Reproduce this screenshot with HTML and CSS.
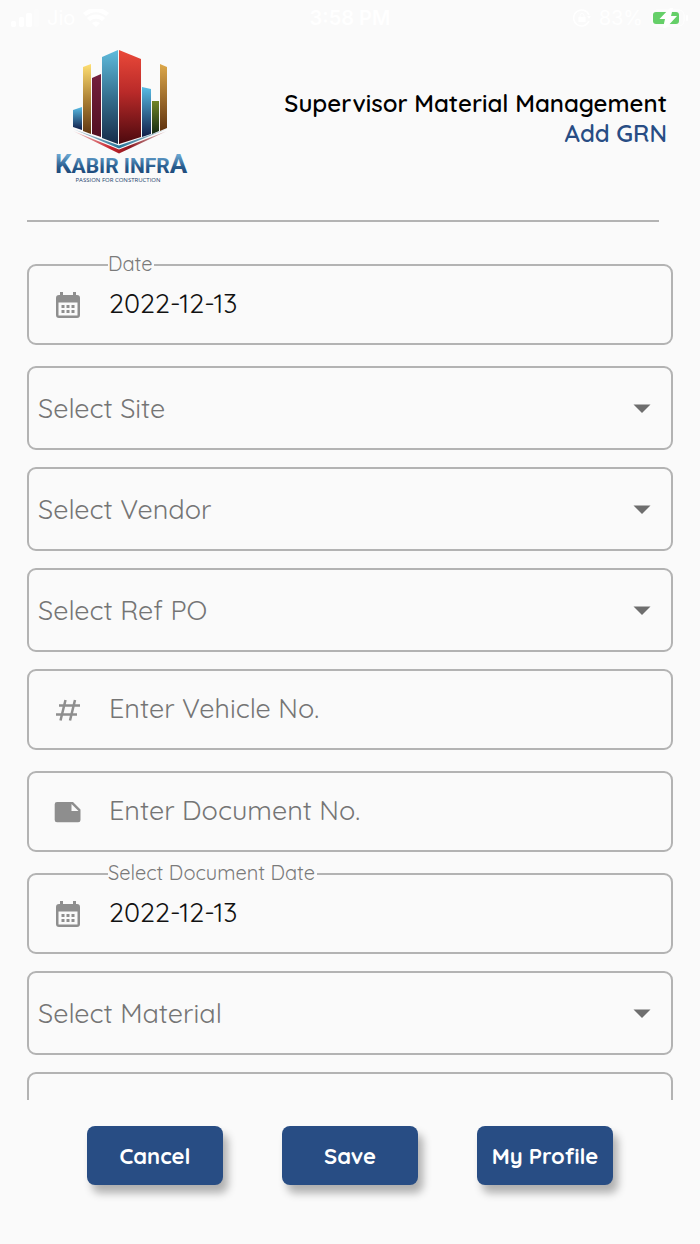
FILE: index.html
```html
<!DOCTYPE html>
<html lang="en">
<head>
<meta charset="utf-8">
<meta name="viewport" content="width=device-width, initial-scale=1">
<title>Add GRN</title>
<link rel="stylesheet" href="styles.css">
</head>
<body>
<svg class="sprite" aria-hidden="true">
  <symbol id="calendar" viewBox="0 0 24 26">
    <path fill-rule="evenodd" d="M4 0h3v3h10V0h3v3h1a3 3 0 0 1 3 3v17a3 3 0 0 1-3 3H3a3 3 0 0 1-3-3V6a3 3 0 0 1 3-3h1zM2.500 10.500V23.500h19V10.500zM5.500 13h3v3h-3zm5 0h3v3h-3zm5 0h3v3h-3zM5.500 18h3v3h-3zm5 0h3v3h-3zm5 0h3v3h-3z"/>
  </symbol>
  <symbol id="arrow" viewBox="0 0 18 9"><path d="M0.500 0.500h17L9 9z"/></symbol>
</svg>

<div class="status">
  <div class="status-group status-left">
    <svg width="28" height="18" viewBox="0 0 28 18"><rect x="0" y="12" width="5" height="6" rx="2"/><rect x="8" y="8" width="5" height="10" rx="2"/><rect x="15" y="4" width="6" height="14" rx="2"/><rect x="23" y="0" width="5" height="18" rx="2" opacity=".3"/></svg>
    <span>Jio</span>
    <svg width="26" height="18" viewBox="0 0 26 18"><path d="M13 18l-4-4a6 6 0 0 1 8 0zM7 12l-3-3a13 13 0 0 1 18 0l-3 3a9 9 0 0 0-12 0zM3 7L0 4a19 19 0 0 1 26 0l-3 3A15 15 0 0 0 3 7z"/></svg>
  </div>
  <strong>3:58 PM</strong>
  <div class="status-group status-right">
    <svg width="18" height="18" viewBox="0 0 18 18"><path d="M16 6a8 8 0 1 0 0 6" fill="none" stroke="#fff" stroke-width="1.500"/><path d="M14 7h4l-2 3zM5.500 8h7v5h-7z"/><path d="M7 8V6.500a2 2 0 0 1 4 0V8" fill="none" stroke="#fff"/></svg>
    <span>83%</span>
    <svg width="38" height="20" viewBox="0 0 38 20"><rect x="1" y="2" width="32" height="16" rx="5" fill="none" stroke="#fff"/><rect x="35" y="7" width="2" height="6" rx="1"/><rect x="2" y="4" width="26" height="12" rx="3" fill="#65cf68"/><path d="M19 0L8.500 11H14l-2 9h3L26 8h-6l2-8z"/></svg>
  </div>
</div>

<header class="header">
  <svg class="logo" viewBox="0 0 132 136" role="img" aria-label="Kabir Infra, passion for construction">
    <defs>
      <linearGradient id="sky" x2="0" y2="1"><stop stop-color="#5fbbdc"/><stop offset=".5" stop-color="#35708f"/><stop offset="1" stop-color="#172c49"/></linearGradient>
      <linearGradient id="red" x2="0" y2="1"><stop stop-color="#ea4939"/><stop offset=".45" stop-color="#b92a29"/><stop offset="1" stop-color="#4c090e"/></linearGradient>
      <linearGradient id="gold" x2="0" y2="1"><stop stop-color="#ffdf72"/><stop offset=".5" stop-color="#ad8236"/><stop offset="1" stop-color="#5f3612"/></linearGradient>
      <linearGradient id="amber" x2="0" y2="1"><stop stop-color="#dda84a"/><stop offset="1" stop-color="#60330f"/></linearGradient>
      <linearGradient id="wine" x2="0" y2="1"><stop stop-color="#74203e"/><stop offset="1" stop-color="#510e20"/></linearGradient>
      <linearGradient id="green" x2="0" y2="1"><stop stop-color="#718526"/><stop offset="1" stop-color="#132a12"/></linearGradient>
      <linearGradient id="navy" x2="0" y2="1"><stop stop-color="#58bce5"/><stop offset="1" stop-color="#101d48"/></linearGradient>
      <linearGradient id="word" x2="0" y2="1"><stop offset=".2" stop-color="#68a5d0"/><stop offset=".6" stop-color="#285b8d"/><stop offset="1" stop-color="#163a69"/></linearGradient>
      <linearGradient id="fadeRed"><stop stop-color="#c83036" stop-opacity=".2"/><stop offset=".4" stop-color="#c8242c"/><stop offset=".6" stop-color="#8b1820"/><stop offset="1" stop-color="#8b1820" stop-opacity=".2"/></linearGradient>
      <linearGradient id="fadeBlue"><stop stop-color="#27658a" stop-opacity=".3"/><stop offset=".5" stop-color="#27779a"/><stop offset="1" stop-color="#27658a" stop-opacity=".3"/></linearGradient>
    </defs>
    <path fill="url(#navy)" d="M18 60l9-3v23l-9-3z"/>
    <path fill="url(#gold)" d="M28 17l8-3v70l-8-3z"/>
    <path fill="url(#wine)" d="M37 28l9-4v63l-9-3z"/>
    <path fill="url(#sky)" d="M47 7l16-7v94l-16-6z"/>
    <path fill="url(#red)" d="M64 0l22 9v78l-22 7z"/>
    <path fill="url(#navy)" d="M87 37l9 2v45l-9 3z"/>
    <path fill="url(#green)" d="M97 51h7v30l-7 3z"/>
    <path fill="url(#amber)" d="M105 14l7 3v61l-7 3z"/>
    <path fill="url(#fadeBlue)" d="M18 79l46 16.500L112 79 64 98.500z"/>
    <path fill="url(#fadeRed)" d="M18 81l46 18.500L112 81 64 103.500z"/>
    <text x="0" y="123" class="logo-name"><tspan class="logo-cap">K</tspan>ABIR INFR<tspan class="logo-cap">A</tspan></text>
    <text x="63" y="132" class="logo-tagline">PASSION FOR CONSTRUCTION</text>
  </svg>
  <div class="titles">
    <h1>Supervisor Material Management</h1>
    <h2>Add GRN</h2>
  </div>
</header>
<hr class="rule">

<form class="form" id="grn">
  <div class="field spaced">
    <label class="float-label" for="date">Date</label>
    <svg class="icon" viewBox="0 0 24 26"><use href="#calendar"/></svg>
    <input id="date" type="text" value="2022-12-13">
  </div>
  <div class="picker">
    <select aria-label="Select Site"><option>Select Site</option></select>
    <svg class="arrow"><use href="#arrow"/></svg>
  </div>
  <div class="picker">
    <select aria-label="Select Vendor"><option>Select Vendor</option></select>
    <svg class="arrow"><use href="#arrow"/></svg>
  </div>
  <div class="picker">
    <select aria-label="Select Ref PO"><option>Select Ref PO</option></select>
    <svg class="arrow"><use href="#arrow"/></svg>
  </div>
  <div class="field spaced">
    <svg class="icon" viewBox="0 0 24 26"><path d="M9.500 3L4.500 23.500M19 3l-5 20.500M3 8.500h21M0 17.500h21" fill="none" stroke="#8e8e8e" stroke-width="2.500"/></svg>
    <input type="text" aria-label="Enter Vehicle No." placeholder="Enter Vehicle No.">
  </div>
  <div class="field spaced">
    <svg class="icon" viewBox="0 0 24 26"><path fill-rule="evenodd" d="M1 3h16l7.500 7.500V21a2.300 2.300 0 0 1-2.300 2.300H1A2.300 2.300 0 0 1-1.300 21V5.300A2.300 2.300 0 0 1 1 3zM15.500 5v7h7z"/></svg>
    <input type="text" aria-label="Enter Document No." placeholder="Enter Document No.">
  </div>
  <div class="field">
    <label class="float-label" for="docdate">Select Document Date</label>
    <svg class="icon" viewBox="0 0 24 26"><use href="#calendar"/></svg>
    <input id="docdate" type="text" value="2022-12-13">
  </div>
  <div class="picker">
    <select aria-label="Select Material"><option>Select Material</option></select>
    <svg class="arrow"><use href="#arrow"/></svg>
  </div>
  <div class="field"></div>
</form>

<footer class="actions">
  <button type="button">Cancel</button>
  <button type="submit" form="grn">Save</button>
  <button type="button">My Profile</button>
</footer>
</body>
</html>
```

FILE: styles.css
```css
* { box-sizing: border-box; }

body {
  margin: 0;
  height: 100vh;
  display: flex;
  flex-direction: column;
  background: #fafafa;
  color: #000;
  font-family: Quicksand, Lato, sans-serif;
}

.sprite { display: none; }

.status {
  display: grid;
  grid-template-columns: 1fr auto 1fr;
  align-items: center;
  height: 36px;
  padding: 0 11px;
  color: #fff;
  fill: #fff;
  font-family: Inter, sans-serif;
  font-size: 20px;
}
.status strong { font-weight: 600; }
.status-group { display: flex; align-items: center; gap: 8px; }
.status-right { justify-content: flex-end; }

.header {
  display: flex;
  align-items: center;
  justify-content: space-between;
  padding: 14px 33px 0 55px;
}
.logo { width: 132px; height: 136px; overflow: visible; }
.logo-name {
  font: bold 21px Roboto, sans-serif;
  fill: url(#word);
}
.logo-cap { font-size: 26px; }
.logo-tagline {
  font: 6px "Open Sans", sans-serif;
  fill: #24446e;
  text-anchor: middle;
}
.titles { text-align: right; }
.titles h1, .titles h2 {
  margin: 0;
  font-size: 24px;
  line-height: 30px;
  font-weight: 600;
}
.titles h2 { color: #284d84; }

.rule {
  align-self: stretch;
  height: 2px;
  margin: 34px 41px 0 27px;
  border: 0;
  background: #b3b3b3;
}

.form {
  flex: 1;
  min-height: 0;
  display: flex;
  flex-direction: column;
  gap: 17px;
  padding: 42px 27px 0;
  overflow-y: auto;
  scrollbar-width: none;
}
.field, .picker {
  position: relative;
  flex: none;
  display: flex;
  align-items: center;
  border: 2px solid #b3b3b3;
  border-radius: 9px;
}
.field { height: 81px; padding-left: 27px; gap: 29px; }
.picker { height: 84px; }
.spaced { margin-bottom: 4px; }

.float-label {
  position: absolute;
  top: -15px;
  left: 79px;
  padding-right: 2px;
  background: #fafafa;
  color: #7a7a7a;
  font-size: 20px;
  line-height: 26px;
  font-weight: 400;
}
.icon {
  flex: none;
  width: 24px;
  height: 26px;
  fill: #8e8e8e;
  overflow: visible;
}
.field input, .picker select {
  flex: 1;
  min-width: 0;
  height: 100%;
  border: 0;
  padding: 0 0 4px;
  outline: 0;
  background: none;
  font: 400 27px Quicksand, Lato, sans-serif;
  color: #111;
}
.field input::placeholder { color: #757575; opacity: 1; }
.picker select {
  appearance: none;
  padding: 0 60px 0 9px;
  color: #757575;
}
.arrow {
  position: absolute;
  right: 20px;
  width: 18px;
  height: 9px;
  fill: #6e6e6e;
  pointer-events: none;
}

.actions {
  display: flex;
  justify-content: center;
  gap: 59px;
  padding: 26px 27px 59px;
}
.actions button {
  width: 136px;
  height: 59px;
  padding: 0;
  border: 0;
  border-radius: 8px;
  background: #284d84;
  color: #fff;
  box-shadow: 5px 8px 8px rgba(0, 0, 0, .3);
  font: 700 22px Quicksand, Lato, sans-serif;
}
```
